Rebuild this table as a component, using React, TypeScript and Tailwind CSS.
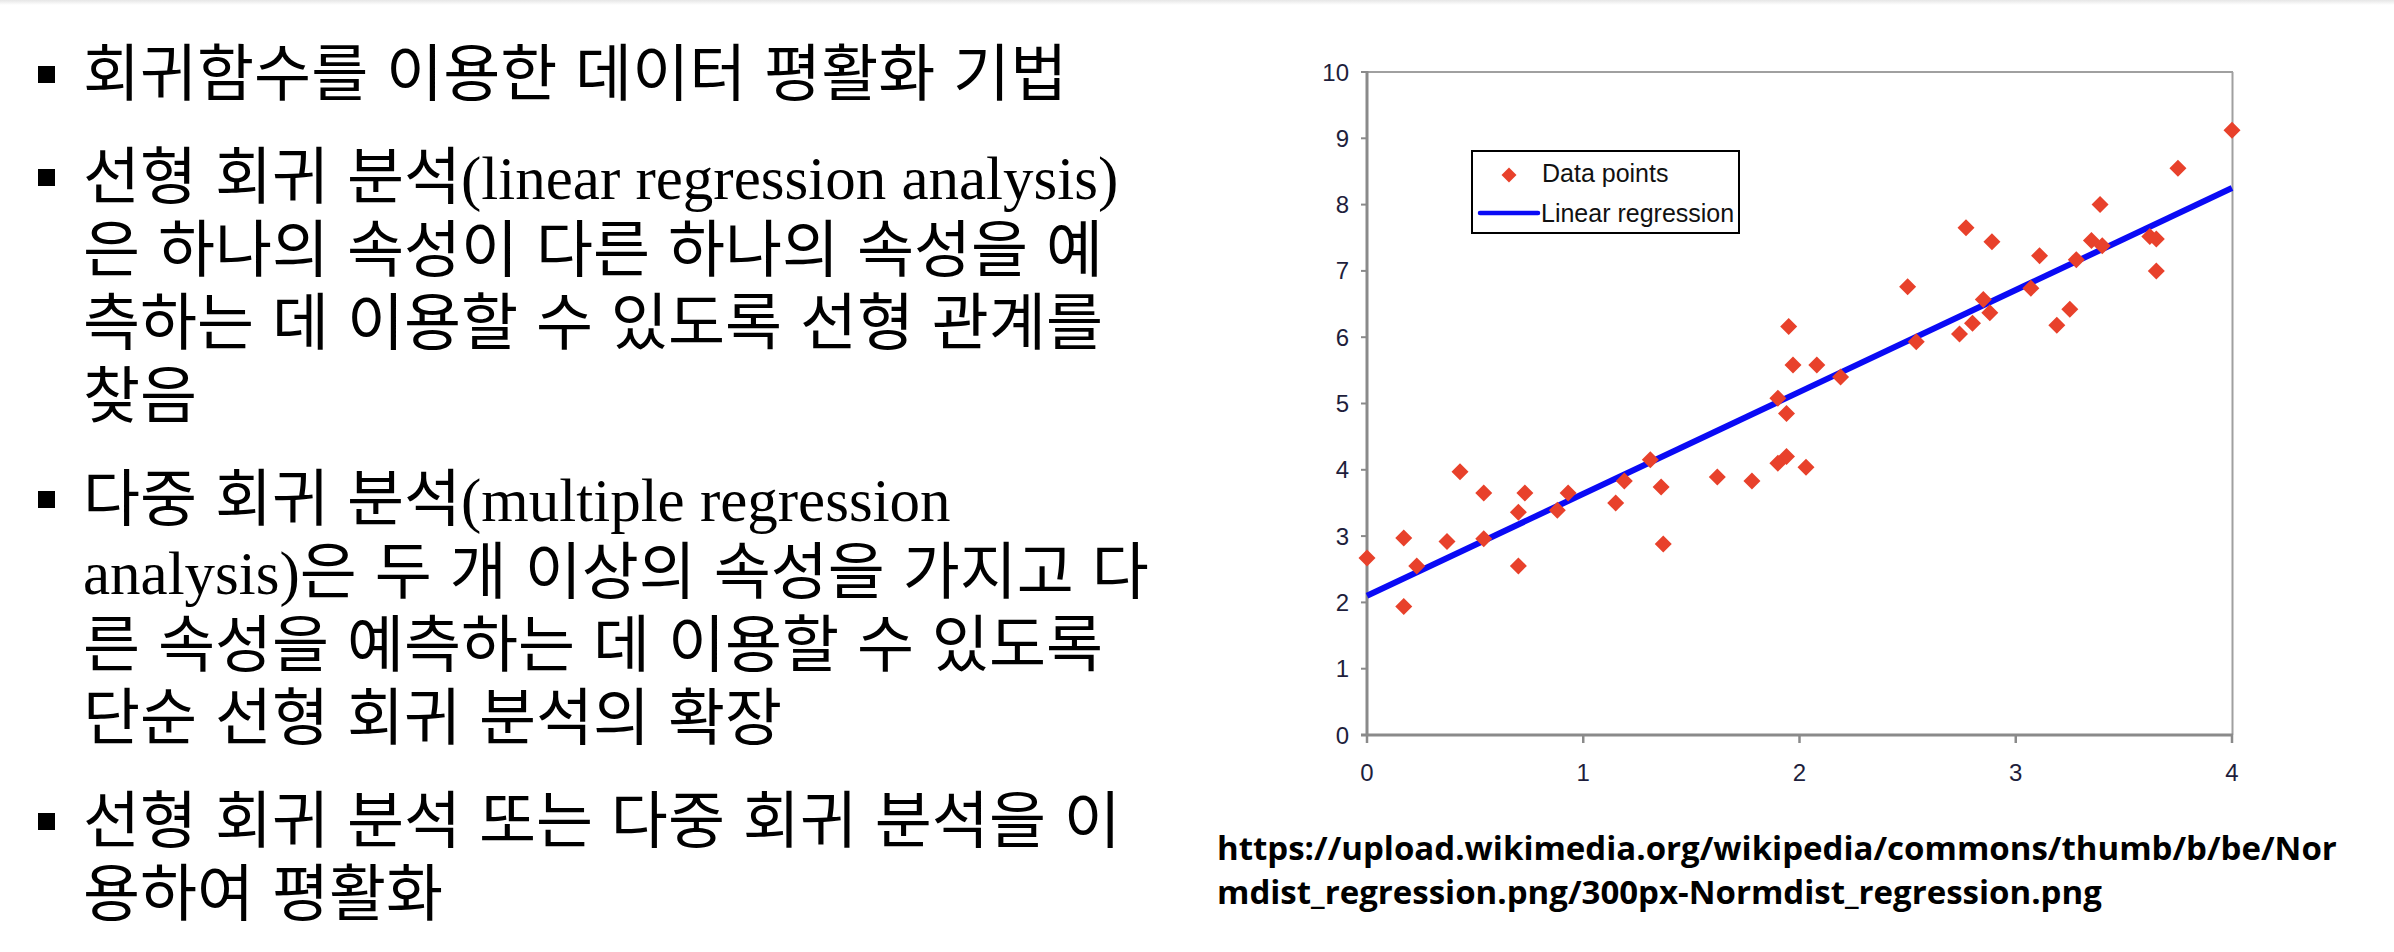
import React from "react";

const X0 = 1367;
const XS = 216.25;
const Y0 = 735;
const YS = 66.3;
const px = (v: number) => X0 + v * XS;
const py = (v: number) => Y0 - v * YS;

const points: [number, number][] = [
  [4.0, 9.12], [3.75, 8.55], [3.39, 8.0], [2.77, 7.65], [2.89, 7.44], [3.11, 7.23],
  [3.35, 7.46], [3.4, 7.38], [3.28, 7.17], [3.62, 7.52], [3.65, 7.48], [3.65, 7.0],
  [2.5, 6.76], [3.07, 6.74], [2.85, 6.57], [2.88, 6.37], [2.8, 6.21], [2.74, 6.05],
  [3.25, 6.42], [3.19, 6.18], [2.54, 5.93], [1.95, 6.16], [1.97, 5.58], [2.08, 5.58],
  [2.19, 5.4], [1.9, 5.08], [1.94, 4.85], [1.94, 4.2], [1.9, 4.1], [2.03, 4.04],
  [1.31, 4.15], [1.62, 3.89], [1.78, 3.83], [1.36, 3.74], [1.19, 3.83], [1.15, 3.5],
  [0.43, 3.97], [0.54, 3.65], [0.73, 3.65], [0.93, 3.65], [0.7, 3.36], [0.88, 3.39],
  [0.0, 2.67], [0.17, 2.97], [0.23, 2.55], [0.37, 2.92], [0.54, 2.96], [0.7, 2.55],
  [0.17, 1.94], [1.37, 2.88],
];

function Diamond({ cx, cy, r, fill }: { cx: number; cy: number; r: number; fill: string }) {
  return (
    <polygon
      points={`${cx},${cy - r} ${cx + r},${cy} ${cx},${cy + r} ${cx - r},${cy}`}
      fill={fill}
    />
  );
}

function Chart() {
  const red = "#e8412b";
  const axis = "#8a8a8a";
  const label = "#1e1e3c";
  return (
    <svg width={1177} height={795} viewBox="1217 5 1177 795" className="block">
      {/* frame */}
      <line x1={X0} y1={72} x2={2233} y2={72} stroke="#a0a0a0" strokeWidth={2} />
      <line x1={2232.5} y1={72} x2={2232.5} y2={735} stroke="#a0a0a0" strokeWidth={2} />
      <line x1={X0} y1={71} x2={X0} y2={736} stroke={axis} strokeWidth={3} />
      <line x1={1361} y1={Y0} x2={2233} y2={Y0} stroke={axis} strokeWidth={3} />
      {/* y ticks and labels */}
      {Array.from({ length: 11 }, (_, i) => (
        <g key={`y${i}`}>
          <line x1={1361} y1={py(i)} x2={X0} y2={py(i)} stroke={axis} strokeWidth={2} />
          <text
            x={1349}
            y={py(i) + 8.5}
            textAnchor="end"
            fontFamily="Liberation Sans, Arial, sans-serif"
            fontSize={24}
            fill={label}
          >
            {i}
          </text>
        </g>
      ))}
      {/* x ticks and labels */}
      {Array.from({ length: 5 }, (_, i) => (
        <g key={`x${i}`}>
          <line x1={px(i)} y1={Y0} x2={px(i)} y2={743} stroke={axis} strokeWidth={2.5} />
          <text
            x={px(i)}
            y={781}
            textAnchor="middle"
            fontFamily="Liberation Sans, Arial, sans-serif"
            fontSize={24}
            fill={label}
          >
            {i}
          </text>
        </g>
      ))}
      {/* regression line */}
      <line x1={px(0)} y1={py(2.1)} x2={px(4)} y2={py(8.25)} stroke="#0a0af5" strokeWidth={6} />
      {/* points */}
      {points.map(([x, y], i) => (
        <Diamond key={i} cx={px(x)} cy={py(y)} r={8.5} fill={red} />
      ))}
      {/* legend */}
      <rect x={1472} y={151} width={267} height={82} fill="white" stroke="black" strokeWidth={2} />
      <Diamond cx={1509} cy={175} r={7.5} fill={red} />
      <text x={1542} y={182} fontFamily="Liberation Sans, Arial, sans-serif" fontSize={25} fill="#111">
        Data points
      </text>
      <line x1={1480} y1={213} x2={1538} y2={213} stroke="#0a0af5" strokeWidth={4.5} strokeLinecap="round" />
      <text x={1541} y={222} fontFamily="Liberation Sans, Arial, sans-serif" fontSize={25} fill="#111">
        Linear regression
      </text>
    </svg>
  );
}

const latin = "font-['Liberation_Serif'] text-[61px] leading-none [word-spacing:normal]";

function Para({ children }: { children: React.ReactNode }) {
  return (
    <div className="flex items-start">
      <div className="mt-[33px] h-[17px] w-[17px] shrink-0 bg-black" />
      <div className="ml-[28px] whitespace-nowrap text-[62px] leading-[73px] text-black [word-spacing:4px]">
        {children}
      </div>
    </div>
  );
}

export default function App() {
  return (
    <div className="relative h-[952px] w-[2394px] overflow-hidden bg-white">
      <div className="h-[5px] bg-gradient-to-b from-[#e6e6e6] to-white" />
      <div className="flex">
        <div className="flex w-[1217px] shrink-0 flex-col gap-[30px] pl-[38px] pt-[28px] font-['Noto_Sans_CJK_KR','Noto_Sans_CJK_SC',sans-serif]">
          <Para>
            <div>회귀함수를 이용한 데이터 평활화 기법</div>
          </Para>
          <Para>
            <div>
              선형 회귀 분석<span className={latin}>(linear regression analysis)</span>
            </div>
            <div>은 하나의 속성이 다른 하나의 속성을 예</div>
            <div>측하는 데 이용할 수 있도록 선형 관계를</div>
            <div>찾음</div>
          </Para>
          <Para>
            <div>
              다중 회귀 분석<span className={latin}>(multiple regression</span>
            </div>
            <div>
              <span className={latin}>analysis)</span>은 두 개 이상의 속성을 가지고 다
            </div>
            <div>른 속성을 예측하는 데 이용할 수 있도록</div>
            <div>단순 선형 회귀 분석의 확장</div>
          </Para>
          <Para>
            <div>선형 회귀 분석 또는 다중 회귀 분석을 이</div>
            <div>용하여 평활화</div>
          </Para>
        </div>
        <div className="flex flex-col">
          <Chart />
          <div className="mt-[26px] font-['Open_Sans',sans-serif] text-[33px] font-bold leading-[44px] text-black">
            <div>https://upload.wikimedia.org/wikipedia/commons/thumb/b/be/Nor</div>
            <div>mdist_regression.png/300px-Normdist_regression.png</div>
          </div>
        </div>
      </div>
    </div>
  );
}
